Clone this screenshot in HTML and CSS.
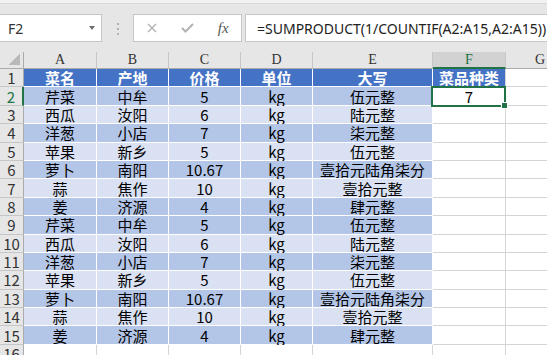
FILE: index.html
```html
<!doctype html>
<html>
<head>
    <meta charset="UTF-8">
    <title>菜品种类</title>
    <link rel="stylesheet" href="styles.css">
</head>
<body>
<div class="edge"></div>
<div class="toolbar">
    <div class="namebox"><span>F2</span><span class="arrow"></span></div>
    <div class="grip"><i></i><i></i><i></i></div>
    <div class="fbtns">
        <span class="btn">
            <svg width="10" height="10" viewBox="0 0 10 10"><path d="M1 1L9 9M9 1L1 9" stroke="#b3b3b3" stroke-width="1.4" fill="none"/></svg>
        </span>
        <span class="btn">
            <svg width="13" height="10" viewBox="0 0 13 10"><path d="M1 5L4.5 8.5L12 1" stroke="#b3b3b3" stroke-width="2" fill="none"/></svg>
        </span>
        <span class="btn fx">fx</span>
    </div>
    <div class="formula">=SUMPRODUCT(1/COUNTIF(A2:A15,A2:A15))</div>
</div>

<div class="sheet">
    <div class="corner"></div>
    <div class="ch">A</div><div class="ch">B</div><div class="ch">C</div><div class="ch">D</div>
    <div class="ch">E</div><div class="ch sel">F</div><div class="ch tail">G</div>

    <div class="rh">1</div>
    <div class="cell hd">菜名</div><div class="cell hd">产地</div><div class="cell hd">价格</div>
    <div class="cell hd">单位</div><div class="cell hd">大写</div><div class="cell hd last">菜品种类</div>
    <div class="cell em"></div>

    <div class="rh sel">2</div>
    <div class="cell b1">芹菜</div><div class="cell b1">中牟</div><div class="cell b1">5</div>
    <div class="cell b1">kg</div><div class="cell b1">伍元整</div><div class="cell em cur">7</div>
    <div class="cell em"></div>

    <div class="rh">3</div>
    <div class="cell b2">西瓜</div><div class="cell b2">汝阳</div><div class="cell b2">6</div>
    <div class="cell b2">kg</div><div class="cell b2">陆元整</div><div class="cell em"></div>
    <div class="cell em"></div>

    <div class="rh">4</div>
    <div class="cell b1">洋葱</div><div class="cell b1">小店</div><div class="cell b1">7</div>
    <div class="cell b1">kg</div><div class="cell b1">柒元整</div><div class="cell em"></div>
    <div class="cell em"></div>

    <div class="rh">5</div>
    <div class="cell b2">苹果</div><div class="cell b2">新乡</div><div class="cell b2">5</div>
    <div class="cell b2">kg</div><div class="cell b2">伍元整</div><div class="cell em"></div>
    <div class="cell em"></div>

    <div class="rh">6</div>
    <div class="cell b1">萝卜</div><div class="cell b1">南阳</div><div class="cell b1">10.67</div>
    <div class="cell b1">kg</div><div class="cell b1">壹拾元陆角柒分</div><div class="cell em"></div>
    <div class="cell em"></div>

    <div class="rh">7</div>
    <div class="cell b2">蒜</div><div class="cell b2">焦作</div><div class="cell b2">10</div>
    <div class="cell b2">kg</div><div class="cell b2">壹拾元整</div><div class="cell em"></div>
    <div class="cell em"></div>

    <div class="rh">8</div>
    <div class="cell b1">姜</div><div class="cell b1">济源</div><div class="cell b1">4</div>
    <div class="cell b1">kg</div><div class="cell b1">肆元整</div><div class="cell em"></div>
    <div class="cell em"></div>

    <div class="rh">9</div>
    <div class="cell b1">芹菜</div><div class="cell b1">中牟</div><div class="cell b1">5</div>
    <div class="cell b1">kg</div><div class="cell b1">伍元整</div><div class="cell em"></div>
    <div class="cell em"></div>

    <div class="rh">10</div>
    <div class="cell b2">西瓜</div><div class="cell b2">汝阳</div><div class="cell b2">6</div>
    <div class="cell b2">kg</div><div class="cell b2">陆元整</div><div class="cell em"></div>
    <div class="cell em"></div>

    <div class="rh">11</div>
    <div class="cell b1">洋葱</div><div class="cell b1">小店</div><div class="cell b1">7</div>
    <div class="cell b1">kg</div><div class="cell b1">柒元整</div><div class="cell em"></div>
    <div class="cell em"></div>

    <div class="rh">12</div>
    <div class="cell b2">苹果</div><div class="cell b2">新乡</div><div class="cell b2">5</div>
    <div class="cell b2">kg</div><div class="cell b2">伍元整</div><div class="cell em"></div>
    <div class="cell em"></div>

    <div class="rh">13</div>
    <div class="cell b1">萝卜</div><div class="cell b1">南阳</div><div class="cell b1">10.67</div>
    <div class="cell b1">kg</div><div class="cell b1">壹拾元陆角柒分</div><div class="cell em"></div>
    <div class="cell em"></div>

    <div class="rh">14</div>
    <div class="cell b2">蒜</div><div class="cell b2">焦作</div><div class="cell b2">10</div>
    <div class="cell b2">kg</div><div class="cell b2">壹拾元整</div><div class="cell em"></div>
    <div class="cell em"></div>

    <div class="rh">15</div>
    <div class="cell b1">姜</div><div class="cell b1">济源</div><div class="cell b1">4</div>
    <div class="cell b1">kg</div><div class="cell b1">肆元整</div><div class="cell em"></div>
    <div class="cell em"></div>

    <div class="rh">16</div>
    <div class="cell em"></div><div class="cell em"></div><div class="cell em"></div>
    <div class="cell em"></div><div class="cell em"></div><div class="cell em"></div>
    <div class="cell em"></div>
</div>
</body>
</html>
```

FILE: styles.css
```css
body {
    margin: 0;
    background: #fff;
    overflow: hidden;
    font-family: "Noto Sans CJK SC", sans-serif;
}

/* formula bar */

.edge {
    height: 3px;
    background: #f1f1f1;
    border-bottom: 1px solid #d9d9d9;
}

.toolbar {
    display: flex;
    align-items: flex-start;
    height: 48px;
    box-sizing: border-box;
    padding-top: 10px;
    background: #e6e6e6;
}

.namebox {
    width: 102px;
    height: 28px;
    box-sizing: border-box;
    display: flex;
    align-items: center;
    justify-content: space-between;
    padding: 0 6px 0 8px;
    background: #fff;
    border: 1px solid #c6c6c6;
    border-left: 0;
    font-family: "Noto Sans", sans-serif;
    font-size: 14px;
    color: #333;
}

.arrow {
    border-left: 3.5px solid transparent;
    border-right: 3.5px solid transparent;
    border-top: 4px solid #6d6d6d;
}

.grip {
    width: 31px;
    display: flex;
    flex-direction: column;
    align-items: center;
    gap: 3px;
    padding-top: 9px;
}

.grip i {
    width: 2px;
    height: 2px;
    background: #b0b0b0;
}

.fbtns {
    width: 109px;
    height: 28px;
    box-sizing: border-box;
    display: flex;
    align-items: center;
    background: #fff;
    border: 1px solid #c6c6c6;
}

.btn {
    width: 36px;
    display: flex;
    justify-content: center;
    align-items: center;
}

.fx {
    font-family: "Liberation Serif", serif;
    font-style: italic;
    font-size: 15px;
    color: #555;
}

.formula {
    flex: 1;
    height: 28px;
    box-sizing: border-box;
    margin-left: 3px;
    padding-left: 11px;
    display: flex;
    align-items: center;
    background: #fff;
    border: 1px solid #c6c6c6;
    border-right: 0;
    font-family: "Noto Sans", sans-serif;
    font-size: 14px;
    color: #222;
    white-space: nowrap;
    overflow: hidden;
}

/* sheet grid */

.sheet {
    display: grid;
    grid-template-columns: 24px 73px 72px 72px 72px 120px 73px 42px;
    grid-template-rows: 17px repeat(16, 18.4px);
}

.sheet > div {
    box-sizing: border-box;
    display: flex;
    align-items: center;
    justify-content: center;
    white-space: nowrap;
    line-height: 1;
}

.corner {
    background: #e6e6e6 linear-gradient(135deg, transparent 50%, #b9b9b9 50%) no-repeat right 3px bottom 3px / 11px 11px;
    border-right: 1px solid #ababab;
    border-bottom: 1px solid #ababab;
}

.ch {
    background: #e6e6e6;
    border-right: 1px solid #c6c6c6;
    border-bottom: 1px solid #ababab;
    font-family: "Liberation Serif", serif;
    font-size: 14px;
    color: #333;
}

.ch.sel {
    background: #d2d2d2;
    color: #217346;
    border-bottom: 2px solid #217346;
}

.ch.tail {
    justify-content: flex-end;
    padding-right: 2px;
}

.rh {
    background: #e6e6e6;
    border-right: 1px solid #ababab;
    border-bottom: 1px solid #c6c6c6;
    font-size: 15px;
    color: #333;
}

.rh.sel {
    color: #217346;
    border-right: 2px solid #217346;
}

.cell {
    border-right: 1px solid #fff;
    border-bottom: 1px solid #fff;
    font-size: 15px;
    color: #000;
}

.hd {
    background: #4472c4;
    color: #fff;
    font-weight: bold;
}

.hd.last {
    border-right-color: #d4d4d4;
}

.b1 {
    background: #b4c6e7;
}

.b2 {
    background: #d9e1f2;
}

.em {
    background: #fff;
    border-color: #d4d4d4;
}

.cur {
    position: relative;
}

.cur::after {
    content: "";
    position: absolute;
    left: -2px;
    top: -1px;
    right: -1px;
    bottom: -2px;
    border: 2px solid #217346;
}

.cur::before {
    content: "";
    position: absolute;
    right: -3px;
    bottom: -4px;
    width: 5px;
    height: 5px;
    background: #217346;
    border: 1px solid #fff;
    z-index: 1;
}
```
